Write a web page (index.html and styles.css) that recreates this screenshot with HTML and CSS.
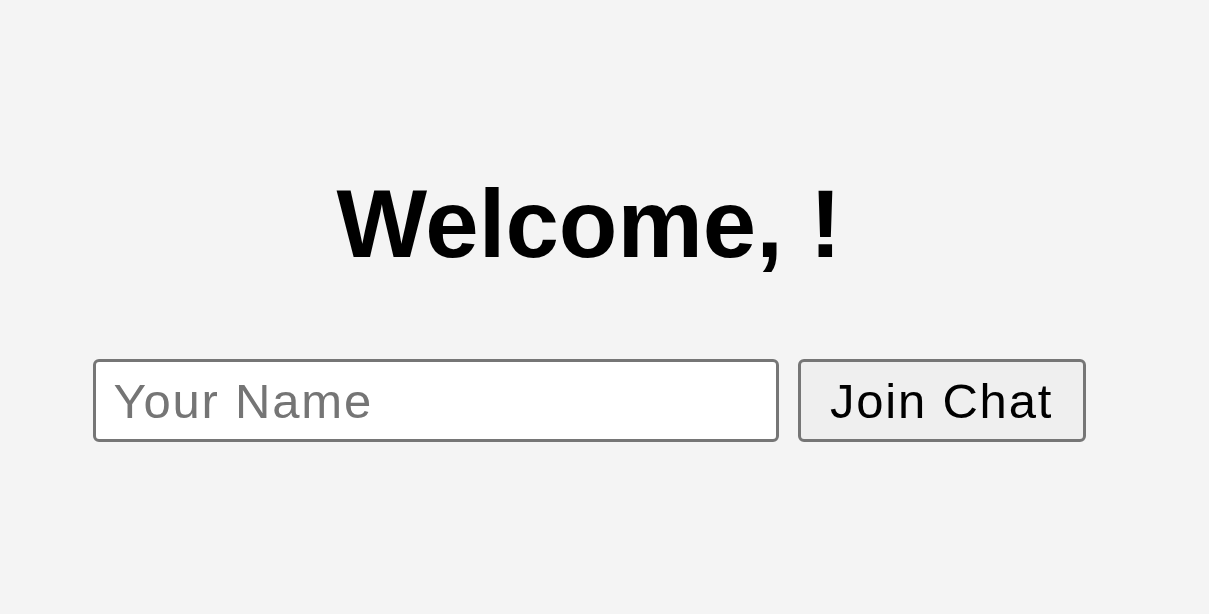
FILE: index.html
```html
<!DOCTYPE html>
<html lang="en">
<head>
<meta charset="utf-8">
<title>Welcome</title>
<link rel="stylesheet" href="styles.css">
</head>
<body>
<main class="page">
  <h1 class="title">Welcome, !</h1>
  <form class="join-form">
    <input class="name-input" type="text" placeholder="Your Name">
    <button class="join-button" type="button">Join Chat</button>
  </form>
</main>
</body>
</html>
```

FILE: styles.css
```css
html, body {
  margin: 0;
  padding: 0;
  height: 100%;
}

body {
  background: #f4f4f4;
  font-family: "Liberation Sans", Arial, sans-serif;
  color: #000;
}

.page {
  box-sizing: border-box;
  height: 100%;
  padding: 0 31px 3px 0;
  display: flex;
  flex-direction: column;
  align-items: center;
  justify-content: center;
}

.title {
  margin: 0 0 80px 0;
  font-size: 96px;
  font-weight: bold;
  line-height: normal;
  text-align: center;
}

.join-form {
  display: flex;
  gap: 19px;
  margin: 0;
}

.name-input {
  box-sizing: border-box;
  width: 686px;
  height: 83px;
  padding: 0 18px;
  border: 3px solid #767676;
  border-radius: 6px;
  background: #fff;
  font-family: "Liberation Sans", Arial, sans-serif;
  font-size: 49px;
  letter-spacing: 1.8px;
  color: #000;
  outline: none;
}

.name-input::placeholder {
  color: #757575;
}

.join-button {
  box-sizing: border-box;
  width: 288px;
  height: 83px;
  padding: 0;
  border: 3px solid #767676;
  border-radius: 6px;
  background: #efefef;
  font-family: "Liberation Sans", Arial, sans-serif;
  font-size: 49px;
  letter-spacing: 1.8px;
  color: #000;
  cursor: pointer;
}
```
